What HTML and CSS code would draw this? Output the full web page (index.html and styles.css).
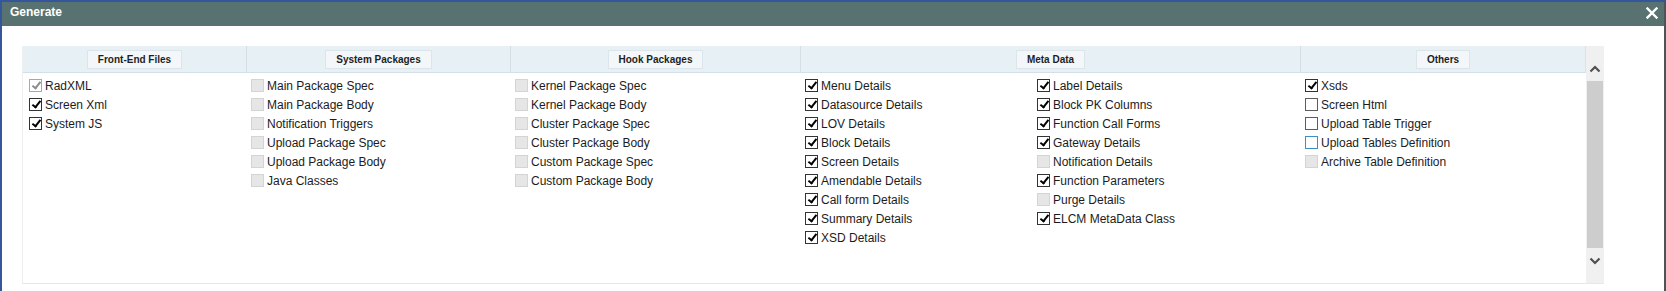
FILE: index.html
```html
<!DOCTYPE html>
<html lang="en">
<head>
    <meta charset="UTF-8">
    <title>Generate</title>
    <link rel="stylesheet" href="styles.css">
</head>
<body>
    <div class="dialog">
        <div class="titlebar">
            <span class="title">Generate</span>
            <svg class="close" width="12" height="12" viewBox="0 0 12 12">
                <path d="M1.5 1.5 L10.5 10.5 M10.5 1.5 L1.5 10.5" stroke="#fff" stroke-width="2.4" stroke-linecap="square"/>
            </svg>
        </div>

        <div class="content">
            <div class="panel">
                <div class="grid">
                    <div class="head">
                        <div class="hcell"><span class="hbtn">Front-End Files</span></div>
                        <div class="hcell"><span class="hbtn">System Packages</span></div>
                        <div class="hcell"><span class="hbtn">Hook Packages</span></div>
                        <div class="hcell"><span class="hbtn">Meta Data</span></div>
                        <div class="hcell"><span class="hbtn">Others</span></div>
                    </div>

                    <div class="cols">
                        <div class="col first">
                            <label class="item"><span class="cb dis-on"></span>RadXML</label>
                            <label class="item"><span class="cb on"></span>Screen Xml</label>
                            <label class="item"><span class="cb on"></span>System JS</label>
                        </div>

                        <div class="col">
                            <label class="item"><span class="cb dis"></span>Main Package Spec</label>
                            <label class="item"><span class="cb dis"></span>Main Package Body</label>
                            <label class="item"><span class="cb dis"></span>Notification Triggers</label>
                            <label class="item"><span class="cb dis"></span>Upload Package Spec</label>
                            <label class="item"><span class="cb dis"></span>Upload Package Body</label>
                            <label class="item"><span class="cb dis"></span>Java Classes</label>
                        </div>

                        <div class="col">
                            <label class="item"><span class="cb dis"></span>Kernel Package Spec</label>
                            <label class="item"><span class="cb dis"></span>Kernel Package Body</label>
                            <label class="item"><span class="cb dis"></span>Cluster Package Spec</label>
                            <label class="item"><span class="cb dis"></span>Cluster Package Body</label>
                            <label class="item"><span class="cb dis"></span>Custom Package Spec</label>
                            <label class="item"><span class="cb dis"></span>Custom Package Body</label>
                        </div>

                        <div class="col meta">
                            <div class="sub">
                                <label class="item"><span class="cb on"></span>Menu Details</label>
                                <label class="item"><span class="cb on"></span>Datasource Details</label>
                                <label class="item"><span class="cb on"></span>LOV Details</label>
                                <label class="item"><span class="cb on"></span>Block Details</label>
                                <label class="item"><span class="cb on"></span>Screen Details</label>
                                <label class="item"><span class="cb on"></span>Amendable Details</label>
                                <label class="item"><span class="cb on"></span>Call form Details</label>
                                <label class="item"><span class="cb on"></span>Summary Details</label>
                                <label class="item"><span class="cb on"></span>XSD Details</label>
                            </div>
                            <div class="sub">
                                <label class="item"><span class="cb on"></span>Label Details</label>
                                <label class="item"><span class="cb on"></span>Block PK Columns</label>
                                <label class="item"><span class="cb on"></span>Function Call Forms</label>
                                <label class="item"><span class="cb on"></span>Gateway Details</label>
                                <label class="item"><span class="cb dis"></span>Notification Details</label>
                                <label class="item"><span class="cb on"></span>Function Parameters</label>
                                <label class="item"><span class="cb dis"></span>Purge Details</label>
                                <label class="item"><span class="cb on"></span>ELCM MetaData Class</label>
                            </div>
                        </div>

                        <div class="col">
                            <label class="item"><span class="cb on"></span>Xsds</label>
                            <label class="item"><span class="cb"></span>Screen Html</label>
                            <label class="item"><span class="cb"></span>Upload Table Trigger</label>
                            <label class="item"><span class="cb focus"></span>Upload Tables Definition</label>
                            <label class="item"><span class="cb dis"></span>Archive Table Definition</label>
                        </div>
                    </div>
                </div>

                <div class="scrollbar">
                    <svg class="arrow" width="12" height="8" viewBox="0 0 12 8">
                        <path d="M1.5 6.5 L6 2 L10.5 6.5" fill="none" stroke="#505050" stroke-width="2.2"/>
                    </svg>
                    <div class="thumb"></div>
                    <svg class="arrow" width="12" height="8" viewBox="0 0 12 8">
                        <path d="M1.5 1.5 L6 6 L10.5 1.5" fill="none" stroke="#505050" stroke-width="2.2"/>
                    </svg>
                </div>
            </div>
        </div>
    </div>
</body>
</html>
```

FILE: styles.css
```css
body {
    margin: 0;
    font-family: "Liberation Sans", Arial, sans-serif;
    background-color: #fff;
}

.dialog {
    width: 1666px;
    height: 291px;
    box-sizing: border-box;
    border-top: 2px solid #34569a;
    border-left: 2px solid #34569a;
    border-right: 2px solid #4d5458;
    background-color: #fff;
}

.titlebar {
    height: 24px;
    background-color: #587272;
    display: flex;
    align-items: center;
    justify-content: space-between;
    padding: 0 6px 0 8px;
}

.title {
    color: #fff;
    font-weight: bold;
    font-size: 12px;
    margin-top: -4px;
}

.close {
    margin-top: -2px;
}

.content {
    padding: 20px 0 0 20px;
}

.panel {
    display: flex;
    width: 1582px;
    height: 237px;
    border-bottom: 1px solid #e8e8e8;
}

.grid {
    flex: 1;
    border-left: 1px solid #eef0f1;
}

.head,
.cols {
    display: grid;
    grid-template-columns: 223px 264px 290px 500px 1fr;
}

.head {
    height: 26px;
    background-color: #e7f0f4;
    border-bottom: 1px solid #d3e0e7;
    border-right: 1px solid #d9e4ea;
}

.hcell {
    display: flex;
    align-items: center;
    justify-content: center;
    border-left: 1px solid #d3dfe5;
}

.hcell:first-child {
    border-left: none;
}

.hbtn {
    font-size: 10px;
    font-weight: bold;
    color: #1e1e1e;
    background-color: #f3f7f9;
    border: 1px solid #dbe5ea;
    line-height: 17px;
    padding: 0 10px;
}

.cols {
    padding-top: 3px;
}

.col {
    padding-left: 5px;
}

.col.first {
    padding-left: 6px;
}

.col.meta {
    display: grid;
    grid-template-columns: 232px 1fr;
}

.item {
    display: flex;
    align-items: center;
    height: 19px;
    font-size: 12px;
    color: #1c1c1c;
    white-space: nowrap;
}

.cb {
    position: relative;
    width: 13px;
    height: 13px;
    box-sizing: border-box;
    border: 1px solid #5c5c5c;
    background-color: #fff;
    margin-right: 3px;
    flex: none;
}

.cb.on {
    border-color: #333;
}

.cb.on::after,
.cb.dis-on::after {
    content: "";
    position: absolute;
    left: 3.5px;
    top: 0;
    width: 3px;
    height: 7px;
    border: solid #000;
    border-width: 0 2.2px 2.2px 0;
    transform: rotate(38deg);
}

.cb.dis {
    background-color: #e6e6e6;
    border-color: #d4d4d4;
}

.cb.dis-on {
    background-color: #fff;
    border-color: #a8a8a8;
}

.cb.dis-on::after {
    border-color: #8c8c8c;
}

.cb.focus {
    border-color: #3f8fc0;
}

.scrollbar {
    width: 18px;
    background-color: #f0f0f0;
    display: flex;
    flex-direction: column;
    align-items: center;
    padding-top: 19px;
    box-sizing: border-box;
}

.arrow {
    flex: none;
}

.thumb {
    width: 16px;
    height: 167px;
    margin: 8px 0 9px;
    background-color: #cdcdcd;
}
```
